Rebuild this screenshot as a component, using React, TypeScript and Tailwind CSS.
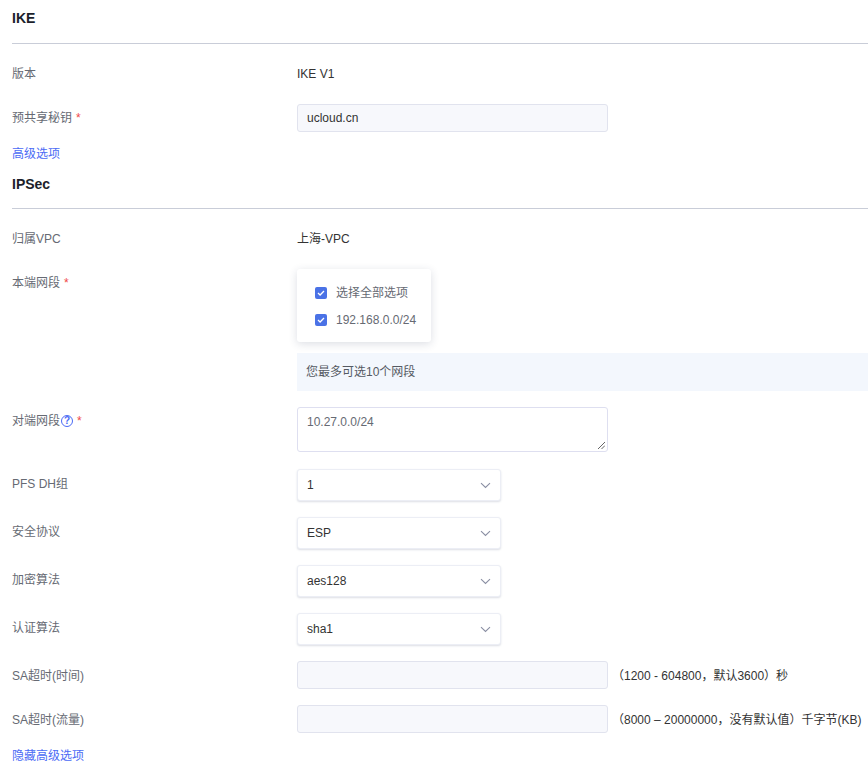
import React from "react";

const Chevron = () => (
  <svg width="11" height="7" viewBox="0 0 11 7" fill="none">
    <path d="M1 1.2L5.5 5.5L10 1.2" stroke="#8a8fa3" strokeWidth="1.1" />
  </svg>
);

const Check = () => (
  <span className="w-[12px] h-[12px] rounded-[2px] bg-[#4a72e6] flex items-center justify-center">
    <svg width="8" height="6" viewBox="0 0 8 6" fill="none">
      <path d="M1 3L3.1 5L7 1" stroke="#ffffff" strokeWidth="1.3" />
    </svg>
  </span>
);

const Label = ({ children, cls = "" }: { children: React.ReactNode; cls?: string }) => (
  <div className={`w-[285px] shrink-0 text-[#666a73] leading-[20px] ${cls}`}>{children}</div>
);

const Star = () => <span className="text-[#f04848] ml-[4px]">*</span>;

const Select = ({ value }: { value: string }) => (
  <div className="w-[204px] h-[32px] bg-white border border-[#eceef5] rounded-[3px] shadow-[0_1px_2px_rgba(60,70,110,0.18)] flex items-center justify-between pl-[9px] pr-[9px] text-[#333]">
    <span>{value}</span>
    <Chevron />
  </div>
);

export default function App() {
  return (
    <div
      className="w-full min-h-[770px] bg-white pl-3 text-[12px]"
      style={{ fontFamily: '"Liberation Sans", Arial, "Noto Sans CJK SC", sans-serif' }}
    >
      <div className="h-[44px] pt-[9px] border-b border-[#c9cdd8] text-[14px] leading-[18px] font-bold text-[#1c1f2b]">
        IKE
      </div>

      <div className="flex items-center h-[20px] mt-[20px]">
        <Label>版本</Label>
        <div className="text-[#333]">IKE V1</div>
      </div>

      <div className="flex items-center h-[28px] mt-[20px]">
        <Label>
          预共享秘钥<Star />
        </Label>
        <div className="w-[311px] h-[28px] bg-[#f7f8fc] border border-[#e1e3ee] rounded-[3px] flex items-center pl-[9px] text-[#333]">
          ucloud.cn
        </div>
      </div>

      <div className="mt-[12px] leading-[20px] text-[#4b6bf5]">高级选项</div>

      <div className="h-[45px] pt-[11px] border-b border-[#c9cdd8] text-[14px] leading-[18px] font-bold text-[#1c1f2b]">
        IPSec
      </div>

      <div className="flex items-center h-[20px] mt-[20px]">
        <Label>归属VPC</Label>
        <div className="text-[#333]">上海-VPC</div>
      </div>

      <div className="flex items-start mt-[20px]">
        <Label cls="pt-[4px]">
          本端网段<Star />
        </Label>
        <div className="flex-1 flex flex-col">
          <div className="w-[134px] h-[73px] bg-white rounded-[3px] shadow-[0_2px_8px_rgba(40,50,90,0.16)] pt-[14px] pl-[18px] flex flex-col gap-[7px] text-[#666a73]">
            <div className="flex items-center gap-[9px] h-[20px]">
              <Check />
              <span>选择全部选项</span>
            </div>
            <div className="flex items-center gap-[9px] h-[20px]">
              <Check />
              <span>192.168.0.0/24</span>
            </div>
          </div>
          <div className="mt-[11px] h-[38px] bg-[#f3f7fd] flex items-center pl-[9px] text-[#555a63]">
            您最多可选10个网段
          </div>
        </div>
      </div>

      <div className="flex items-start mt-[16px]">
        <Label cls="pt-[4px]">
          <span className="inline-flex items-center">
            对端网段
            <span className="ml-[1px] w-[12px] h-[12px] rounded-full border-[1.3px] border-[#4b6bf5] text-[#4b6bf5] text-[10px] leading-[10px] font-bold flex items-center justify-center">
              ?
            </span>
            <Star />
          </span>
        </Label>
        <div className="relative w-[311px] h-[45px] bg-white border border-[#dedff0] rounded-[3px] pl-[9px] pt-[5px] text-[#666a73] leading-[18px]">
          10.27.0.0/24
          <svg className="absolute right-[2px] bottom-[2px]" width="7" height="7" viewBox="0 0 7 7">
            <path d="M7 0L0 7M7 3.5L3.5 7" stroke="#555" strokeWidth="0.9" />
          </svg>
        </div>
      </div>

      {[
        ["PFS DH组", "1"],
        ["安全协议", "ESP"],
        ["加密算法", "aes128"],
        ["认证算法", "sha1"],
      ].map(([l, v], i) => (
        <div key={l} className={`flex items-start ${i === 0 ? "mt-[17px]" : "mt-[16px]"}`}>
          <Label cls="pt-[5px]">{l}</Label>
          <Select value={v} />
        </div>
      ))}

      <div className="flex items-center h-[28px] mt-[16px]">
        <Label cls="pt-[1px]">SA超时(时间)</Label>
        <div className="w-[311px] h-[28px] bg-[#f7f8fc] border border-[#e1e3ee] rounded-[3px]" />
        <span className="ml-[4px] text-[#333] pt-[1px]">（1200 - 604800，默认3600）秒</span>
      </div>

      <div className="flex items-center h-[28px] mt-[16px]">
        <Label cls="pt-[1px]">SA超时(流量)</Label>
        <div className="w-[311px] h-[28px] bg-[#f7f8fc] border border-[#e1e3ee] rounded-[3px]" />
        <span className="ml-[4px] text-[#333] whitespace-nowrap pt-[1px]">（8000 – 20000000，没有默认值）千字节(KB)</span>
      </div>

      <div className="mt-[13px] leading-[20px] text-[#4b6bf5]">隐藏高级选项</div>
    </div>
  );
}
